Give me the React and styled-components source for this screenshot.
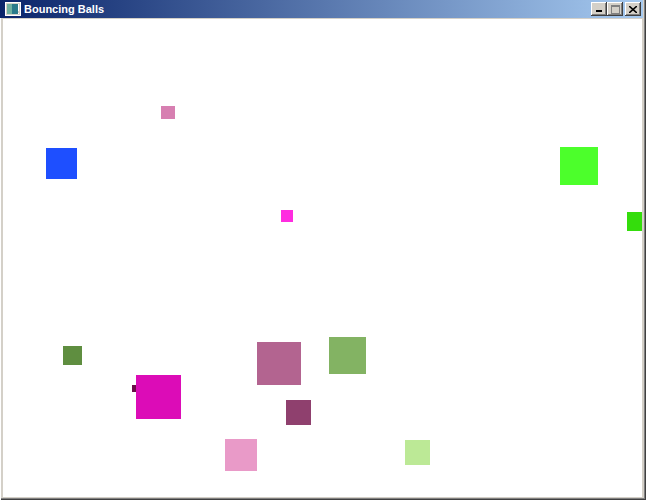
import React from "react";
import styled, { createGlobalStyle } from "styled-components";

const GlobalStyle = createGlobalStyle`
  html, body {
    margin: 0;
    padding: 0;
    background: #ffffff;
    overflow: hidden;
  }
`;

const balls = [
  { x: 161, y: 106, w: 14, h: 13, color: "#d77fb1" },
  { x: 46, y: 148, w: 31, h: 31, color: "#1e4fff" },
  { x: 560, y: 147, w: 38, h: 38, color: "#4cff2b" },
  { x: 627, y: 212, w: 19, h: 19, color: "#34dd0c" },
  { x: 281, y: 210, w: 12, h: 12, color: "#ff2ce0" },
  { x: 63, y: 346, w: 19, h: 19, color: "#5f8e40" },
  { x: 257, y: 342, w: 44, h: 43, color: "#b36490" },
  { x: 329, y: 337, w: 37, h: 37, color: "#83b363" },
  { x: 132, y: 385, w: 7, h: 7, color: "#6a0f47" },
  { x: 136, y: 375, w: 45, h: 44, color: "#dc0cb7" },
  { x: 286, y: 400, w: 25, h: 25, color: "#8f406e" },
  { x: 225, y: 439, w: 32, h: 32, color: "#e99ac8" },
  { x: 405, y: 440, w: 25, h: 25, color: "#bce996" },
];

// client area origin in page coordinates
const OX = 3;
const OY = 19;

const Window = styled.div`
  width: 646px;
  height: 500px;
  box-sizing: border-box;
  background: #d4d0c8;
  display: flex;
  flex-direction: column;
  padding: 0 4px 3px 3px;
  box-shadow: inset 1px 0 0 #ffffff, inset -1px -1px 0 #404040,
    inset -2px -2px 0 #808080;
`;

const TitleBar = styled.div`
  height: 18px;
  margin: 0 -1px 1px -3px;
  padding: 0 2px 0 5px;
  display: flex;
  align-items: center;
  gap: 3px;
  background: linear-gradient(to right, #0a246a, #a6caf0);
`;

const Title = styled.span`
  flex: 1;
  color: #ffffff;
  font-family: "Liberation Sans", Arial, sans-serif;
  font-weight: bold;
  font-size: 11px;
`;

const Buttons = styled.div`
  display: flex;
  align-items: center;
`;

const CapButton = styled.div`
  width: 16px;
  height: 14px;
  box-sizing: border-box;
  margin-left: ${(p) => (p.$gap ? "2px" : "0")};
  background: #d4d0c8;
  box-shadow: inset -1px -1px 0 #404040, inset 1px 1px 0 #ffffff,
    inset -2px -2px 0 #808080;
  display: flex;
  align-items: center;
  justify-content: center;
`;

const Client = styled.div`
  position: relative;
  flex: 1;
  background: #ffffff;
  overflow: hidden;
`;

const Ball = styled.div`
  position: absolute;
  background: ${(p) => p.$color};
`;

function AppIcon() {
  return (
    <svg width="16" height="14" viewBox="0 0 16 14">
      <rect x="0.5" y="0.5" width="15" height="13" fill="#d4d0c8" stroke="#ffffff" />
      <rect x="2" y="2" width="11" height="10" fill="#2a7a8a" />
      <rect x="2" y="2" width="5" height="10" fill="#6fb0a0" />
      <rect x="13" y="2" width="1" height="7" fill="#ffffff" />
      <rect x="13" y="11" width="1" height="1" fill="#ffffff" />
    </svg>
  );
}

export default function App() {
  return (
    <>
      <GlobalStyle />
      <Window>
        <TitleBar>
          <AppIcon />
          <Title>Bouncing Balls</Title>
          <Buttons>
            <CapButton>
              <svg width="8" height="8" viewBox="0 0 8 8">
                <rect x="1" y="5" width="6" height="2" fill="#000" />
              </svg>
            </CapButton>
            <CapButton>
              <svg width="9" height="9" viewBox="0 0 9 9">
                <rect x="0.5" y="0.5" width="8" height="8" fill="none" stroke="#808080" />
                <rect x="0" y="1" width="9" height="1" fill="#808080" />
              </svg>
            </CapButton>
            <CapButton $gap>
              <svg width="8" height="7" viewBox="0 0 8 7">
                <path d="M0 0 L8 7 M8 0 L0 7" stroke="#000" strokeWidth="1.6" />
              </svg>
            </CapButton>
          </Buttons>
        </TitleBar>
        <Client>
          {balls.map((b, i) => (
            <Ball
              key={i}
              $color={b.color}
              style={{ left: b.x - OX, top: b.y - OY, width: b.w, height: b.h }}
            />
          ))}
        </Client>
      </Window>
    </>
  );
}
